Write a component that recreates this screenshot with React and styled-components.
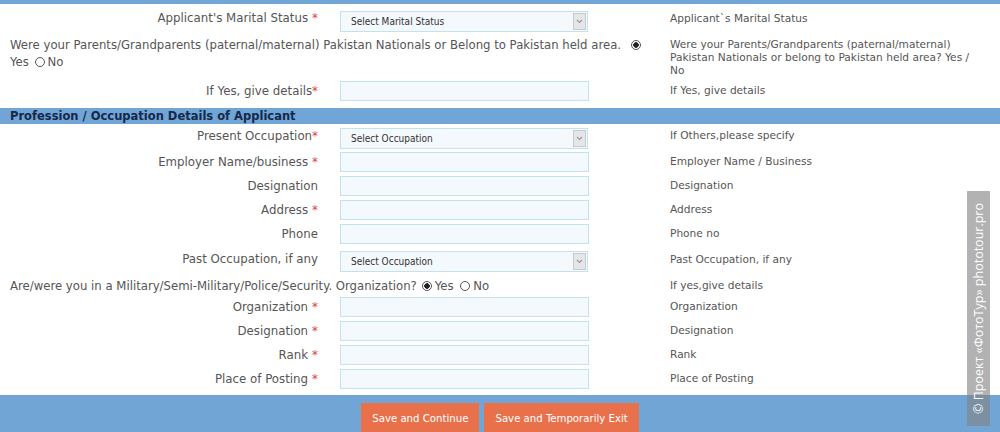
import React from "react";
import styled, { createGlobalStyle } from "styled-components";

const Global = createGlobalStyle`
  html, body { margin: 0; padding: 0; background: #fff; }
  body { font-family: "DejaVu Sans", Verdana, sans-serif; }
`;

const Page = styled.div`
  position: relative;
  width: 1000px;
  height: 432px;
  overflow: hidden;
  border-top: 4px solid #70a5d6;
  box-sizing: border-box;
  display: flex;
  flex-direction: column;
`;

const Section = styled.div`
  display: flex;
  flex-direction: column;
  padding-top: ${(p) => p.$pt || 0}px;
`;

const Row = styled.div`
  display: grid;
  grid-template-columns: 340px 330px 1fr;
  align-items: start;
  min-height: ${(p) => p.$h || 24}px;
`;

const Label = styled.div`
  text-align: right;
  padding-right: 22px;
  font-size: 11.8px;
  line-height: 16px;
  padding-top: ${(p) => p.$pt ?? 3}px;
  color: #555;
  white-space: nowrap;
`;

const Star = styled.span`
  color: #d2463f;
  margin-left: ${(p) => (p.$tight ? 0 : 4)}px;
`;

const Question = styled.div`
  grid-column: 1 / span 2;
  padding: ${(p) => p.$pt || 0}px 14px 0 10px;
  font-size: 11.7px;
  line-height: 17px;
  color: #555;
`;

const Help = styled.div`
  font-size: 10.6px;
  line-height: 13px;
  color: #555;
  padding-top: ${(p) => p.$pt ?? 4}px;
  padding-right: 20px;
`;

const TextInput = styled.div`
  width: 247px;
  height: 18px;
  margin-top: ${(p) => p.$mt ?? 1}px;
  border: 1px solid #c4e2ee;
  background: #f3f9fd;
`;

const Select = styled.div`
  width: 236px;
  height: 19px;
  margin-top: ${(p) => p.$mt ?? 1}px;
  border: 1px solid #c4e2ee;
  background: #f3f9fd;
  display: flex;
  align-items: center;
  justify-content: space-between;
  padding-left: 10px;
  font-family: "DejaVu Sans Condensed", "Liberation Sans", sans-serif;
  font-size: 10px;
  color: #333;
`;

const Arrow = styled.span`
  width: 13px;
  height: 17px;
  margin-right: 1px;
  background: #e4e6e8;
  border: 1px solid #c8cacc;
  box-sizing: border-box;
  display: flex;
  align-items: center;
  justify-content: center;
`;

const Radio = styled.span`
  display: inline-block;
  width: 10px;
  height: 10px;
  border: 1px solid #555;
  border-radius: 50%;
  box-sizing: border-box;
  vertical-align: -1px;
  margin: 0 3px 0 ${(p) => p.$ml ?? 4}px;
  background: ${(p) =>
    p.$checked ? "radial-gradient(circle, #222 0 2.5px, #fff 3px)" : "#fff"};
`;

const SectionHeader = styled.div`
  background: #70a5d6;
  height: 16px;
  margin: 4px 0 3px;
  padding-left: 10px;
  font-size: 11.5px;
  font-weight: bold;
  line-height: 16px;
  color: #16284a;
`;

const Footer = styled.div`
  margin-top: auto;
  height: 37px;
  background: #70a5d6;
  display: flex;
  justify-content: center;
  align-items: flex-start;
  gap: 5px;
  padding-top: 8px;
  box-sizing: border-box;
`;

const Button = styled.button`
  border: none;
  background: #e8714c;
  color: #fff;
  font-family: "DejaVu Sans Condensed", "Liberation Sans", sans-serif;
  font-size: 11.3px;
  height: 32px;
  padding: 0 11px 1px;
  cursor: pointer;
`;

const Watermark = styled.div`
  position: absolute;
  right: 10px;
  top: 187px;
  width: 23px;
  height: 235px;
  background: rgba(130, 130, 130, 0.62);
  display: flex;
  align-items: center;
  justify-content: center;
`;

const WatermarkText = styled.span`
  transform: rotate(-90deg);
  white-space: nowrap;
  color: #fff;
  font-family: "Open Sans", "Noto Sans", sans-serif;
  font-size: 12.5px;
`;

const ArrowIcon = () => (
  <svg width="7" height="5" viewBox="0 0 7 5">
    <path d="M1 1 L3.5 3.5 L6 1" stroke="#999" strokeWidth="1.2" fill="none" />
  </svg>
);

const SelectBox = ({ text, mt }) => (
  <Select $mt={mt}>
    <span>{text}</span>
    <Arrow>
      <ArrowIcon />
    </Arrow>
  </Select>
);

const Field = ({ label, star, tight, select, help, labelPt, helpPt, mt }) => (
  <Row>
    <Label $pt={labelPt}>
      {label}
      {star && <Star $tight={tight}>*</Star>}
    </Label>
    {select ? <SelectBox text={select} mt={mt} /> : <TextInput $mt={mt} />}
    <Help $pt={helpPt}>{help}</Help>
  </Row>
);

export default function App() {
  return (
    <>
      <Global />
      <Page>
        <Section $pt={5}>
          <Row>
            <Label $pt={1}>
              Applicant's Marital Status<Star>*</Star>
            </Label>
            <SelectBox text="Select Marital Status" mt={2} />
            <Help $pt={3}>Applicant`s Marital Status</Help>
          </Row>
          <Row $h={47}>
            <Question $pt={4}>
              Were your Parents/Grandparents (paternal/maternal) Pakistan Nationals or Belong to
              Pakistan held area. <Radio $checked $ml={6} /> Yes <Radio $ml={2} />No
            </Question>
            <Help $pt={5}>
              Were your Parents/Grandparents (paternal/maternal) Pakistan Nationals or belong to
              Pakistan held area? Yes / No
            </Help>
          </Row>
          <Field label="If Yes, give details" star tight help="If Yes, give details" />
        </Section>
        <SectionHeader>Profession / Occupation Details of Applicant</SectionHeader>
        <Section>
          <Field
            label="Present Occupation"
            star
            tight
            select="Select Occupation"
            help="If Others,please specify"
            labelPt={1}
            helpPt={2}
          />
          <Field label="Employer Name/business" star help="Employer Name / Business" />
          <Field label="Designation" help="Designation" />
          <Field label="Address" star help="Address" />
          <Field label="Phone" help="Phone no" />
          <Row $h={26}>
            <Label $pt={4}>Past Occupation, if any</Label>
            <SelectBox text="Select Occupation" mt={4} />
            <Help $pt={6}>Past Occupation, if any</Help>
          </Row>
          <Row $h={23}>
            <Question $pt={5}>
              Are/were you in a Military/Semi-Military/Police/Security. Organization?
              <Radio $checked $ml={5} />Yes <Radio $ml={3} />No
            </Question>
            <Help $pt={6}>If yes,give details</Help>
          </Row>
          <Field label="Organization" star help="Organization" />
          <Field label="Designation" star help="Designation" />
          <Field label="Rank" star help="Rank" />
          <Field label="Place of Posting" star help="Place of Posting" />
        </Section>
        <Footer>
          <Button>Save and Continue</Button>
          <Button>Save and Temporarily Exit</Button>
        </Footer>
        <Watermark>
          <WatermarkText>© Проект «ФотоТур» phototour.pro</WatermarkText>
        </Watermark>
      </Page>
    </>
  );
}
